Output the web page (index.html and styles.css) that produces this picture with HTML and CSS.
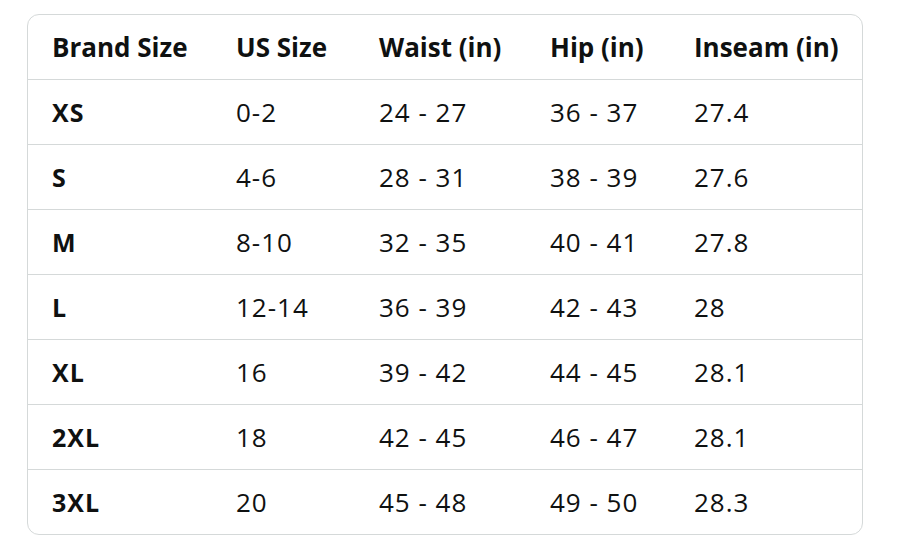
FILE: index.html
```html
<!DOCTYPE html>
<html>
<head>
<meta charset="utf-8">
<link rel="stylesheet" href="styles.css">
</head>
<body>
<div class="chart">
  <table class="size-table">
    <colgroup>
      <col class="c1"><col class="c2"><col class="c3"><col class="c4"><col class="c5">
    </colgroup>
    <thead>
      <tr><th>Brand Size</th><th>US Size</th><th>Waist (in)</th><th>Hip (in)</th><th>Inseam (in)</th></tr>
    </thead>
    <tbody>
      <tr><th>XS</th><td>0-2</td><td>24 - 27</td><td>36 - 37</td><td>27.4</td></tr>
      <tr><th>S</th><td>4-6</td><td>28 - 31</td><td>38 - 39</td><td>27.6</td></tr>
      <tr><th>M</th><td>8-10</td><td>32 - 35</td><td>40 - 41</td><td>27.8</td></tr>
      <tr><th>L</th><td>12-14</td><td>36 - 39</td><td>42 - 43</td><td>28</td></tr>
      <tr><th>XL</th><td>16</td><td>39 - 42</td><td>44 - 45</td><td>28.1</td></tr>
      <tr><th>2XL</th><td>18</td><td>42 - 45</td><td>46 - 47</td><td>28.1</td></tr>
      <tr><th>3XL</th><td>20</td><td>45 - 48</td><td>49 - 50</td><td>28.3</td></tr>
    </tbody>
  </table>
</div>
</body>
</html>
```

FILE: styles.css
```css
html, body {
  margin: 0;
  padding: 0;
  background: #ffffff;
}
body {
  font-family: "Open Sans", "Noto Sans", sans-serif;
  color: #0f1111;
}
.chart {
  margin: 14px 0 0 27px;
  width: 834px;
  border: 1px solid #d5d9d9;
  border-radius: 12px;
  overflow: hidden;
}
.size-table {
  width: 100%;
  border-collapse: collapse;
  table-layout: fixed;
}
.c1 { width: 184px; }
.c2 { width: 143px; }
.c3 { width: 171px; }
.c4 { width: 144px; }
.size-table th,
.size-table td {
  height: 64px;
  padding: 0 0 0 24px;
  text-align: left;
  line-height: 30px;
  vertical-align: middle;
  white-space: nowrap;
}
.size-table thead th {
  font-size: 26px;
  font-weight: 700;
}
.size-table tbody th {
  font-size: 25px;
  font-weight: 700;
  letter-spacing: 1px;
}
.size-table tbody td {
  font-size: 26px;
  font-weight: 400;
  letter-spacing: 1px;
}
.size-table tbody th,
.size-table tbody td {
  border-top: 1px solid #d5d9d9;
}
```
